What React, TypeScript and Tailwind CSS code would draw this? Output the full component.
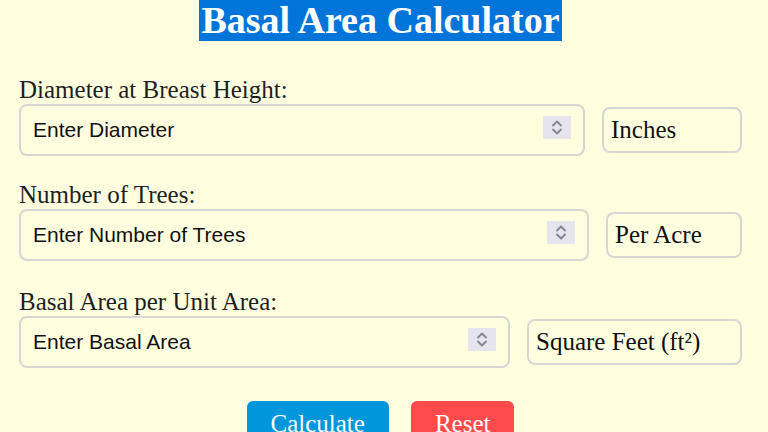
import React from "react";

function Spinner() {
  return (
    <div className="mt-[10px] mr-[12px] flex h-[23px] w-[28px] shrink-0 items-center justify-center self-start bg-[#e6e5ee]">
      <svg width="28" height="23" viewBox="0 0 28 23" fill="none">
        <path d="M10 9.5 L14 5.5 L18 9.5" stroke="#85858f" strokeWidth="1.8" strokeLinecap="round" strokeLinejoin="round" />
        <path d="M10 13.5 L14 17.5 L18 13.5" stroke="#85858f" strokeWidth="1.8" strokeLinecap="round" strokeLinejoin="round" />
      </svg>
    </div>
  );
}

function Group({
  label,
  placeholder,
  unit,
  unitW,
  mt,
}: {
  label: string;
  placeholder: string;
  unit: string;
  unitW: string;
  mt: string;
}) {
  return (
    <div className={mt}>
      <div className="h-[28px] text-[25px] leading-[28px] text-[#1e1e1e]">{label}</div>
      <div className="flex items-center gap-[17px]">
        <div className="flex h-[52px] min-w-0 flex-1 items-center rounded-[8px] border-2 border-[#d6d6d2]">
          <span
            className="flex-1 pl-[12px] text-[21px] text-[#111]"
            style={{ fontFamily: '"Liberation Sans", Arial, sans-serif' }}
          >
            {placeholder}
          </span>
          <Spinner />
        </div>
        <div
          className={`flex h-[46px] shrink-0 items-center rounded-[8px] border-2 border-[#d6d6d2] pl-[7px] text-[25px] text-[#111] ${unitW}`}
        >
          {unit}
        </div>
      </div>
    </div>
  );
}

export default function App() {
  return (
    <div
      className="min-h-[432px] w-full overflow-hidden bg-[#ffffe0] pl-[19px] pr-[26px]"
      style={{ fontFamily: '"Liberation Serif", "Times New Roman", serif' }}
    >
      <div className="flex justify-center">
        <h1 className="m-0 bg-[#0074d9] px-[2px] text-[38px] font-bold leading-[41px] text-white">
          Basal Area Calculator
        </h1>
      </div>
      <Group
        label="Diameter at Breast Height:"
        placeholder="Enter Diameter"
        unit="Inches"
        unitW="w-[140px]"
        mt="mt-[35px]"
      />
      <Group
        label="Number of Trees:"
        placeholder="Enter Number of Trees"
        unit="Per Acre"
        unitW="w-[136px]"
        mt="mt-[25px]"
      />
      <Group
        label="Basal Area per Unit Area:"
        placeholder="Enter Basal Area"
        unit="Square Feet (ft²)"
        unitW="w-[215px]"
        mt="mt-[27px]"
      />
      <div className="mt-[33px] flex justify-center gap-[22px]">
        <button className="h-[50px] rounded-[6px] bg-[#0096db] px-[24px] pb-[4px] text-[25px] text-white">
          Calculate
        </button>
        <button className="h-[50px] rounded-[6px] bg-[#ff4b4b] px-[24px] pb-[4px] text-[25px] text-white">
          Reset
        </button>
      </div>
    </div>
  );
}
